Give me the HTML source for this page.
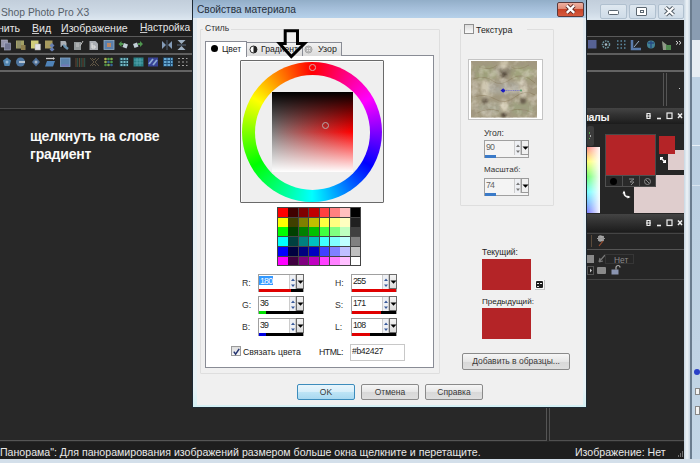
<!DOCTYPE html>
<html><head><meta charset="utf-8">
<style>
*{margin:0;padding:0;box-sizing:border-box}
html,body{width:700px;height:463px;overflow:hidden;background:#282828;font-family:"Liberation Sans",sans-serif;-webkit-font-smoothing:antialiased}
.a{position:absolute}
.t{position:absolute;white-space:pre;line-height:1}
u{text-decoration-thickness:.7px;text-underline-offset:.5px;text-decoration-color:#c8c8c8}
svg{position:absolute;overflow:visible}
</style></head><body>
<div class="a" style="left:0px;top:0px;width:690px;height:20px;background:linear-gradient(#c2cedb,#cdd9e5 60%,#dde7f0);"></div>
<div class="t" style="left:1px;top:8px;font-size:10.3px;color:#56606a;">Shop Photo Pro X3</div>
<div class="a" style="left:600px;top:4px;width:27px;height:14.5px;background:linear-gradient(#dfe8f0,#cfdce8);border:1px solid #b0c0cf;border-radius:2px"></div>
<div class="a" style="left:629px;top:4px;width:27px;height:14.5px;background:linear-gradient(#dfe8f0,#cfdce8);border:1px solid #b0c0cf;border-radius:2px"></div>
<div class="a" style="left:658px;top:4px;width:26px;height:14.5px;background:linear-gradient(#dfe8f0,#cfdce8);border:1px solid #b0c0cf;border-radius:2px"></div>
<div class="a" style="left:608px;top:10px;width:11px;height:4.5px;background:#fff;border:1px solid #5b6670;border-radius:1.5px"></div>
<div class="a" style="left:636px;top:6.5px;width:11px;height:9.5px;background:#fff;border:1.5px solid #5b6670;border-radius:1px"></div>
<div class="a" style="left:639.5px;top:9.5px;width:4.5px;height:3.5px;background:#fff;border:1px solid #5b6670"></div>
<svg style="left:663px;top:5px" width="13" height="12"><path d="M2.5 2.5L10.5 10M10.5 2.5L2.5 10" stroke="#4e5862" stroke-width="4"/><path d="M2.5 2.5L10.5 10M10.5 2.5L2.5 10" stroke="#fff" stroke-width="2.2"/></svg>
<div class="a" style="left:684px;top:0px;width:6px;height:463px;background:linear-gradient(90deg,#c8d6e2,#eef4f8 50%,#c8d6e2);"></div>
<div class="a" style="left:690px;top:0px;width:2px;height:463px;background:#6a7c8e;"></div>
<div class="a" style="left:692px;top:0px;width:8px;height:463px;background:linear-gradient(#b4cade,#c4d6e6);"></div>
<div class="a" style="left:692px;top:0px;width:8px;height:40px;background:#8a9db2;"></div>
<div class="a" style="left:692px;top:40px;width:8px;height:37px;background:#e6edf3;"></div>
<div class="a" style="left:692px;top:77px;width:8px;height:68px;background:#bed2e4;"></div>
<div class="a" style="left:692px;top:144.5px;width:8px;height:1px;background:#e8f0f6;"></div>
<div class="a" style="left:692px;top:185px;width:8px;height:1px;background:#d8e4ee;"></div>
<div class="a" style="left:694px;top:369px;width:6px;height:6px;background:#2a40c8;border-radius:50%"></div>
<div class="a" style="left:695px;top:388px;width:5px;height:7px;background:#f4f4f4;border:1px solid #888"></div>
<div class="a" style="left:695px;top:406px;width:5px;height:9px;background:#f4f4f4;border:1px solid #888"></div>
<div class="a" style="left:0px;top:20px;width:684px;height:16px;background:#1d1d1d;"></div>
<div class="t" style="left:-2px;top:23px;font-size:10.6px;color:#e6e6e6;">нить</div>
<div class="t" style="left:32px;top:23px;font-size:10.6px;color:#e6e6e6;"><u>В</u>ид</div>
<div class="t" style="left:61px;top:23px;font-size:10.6px;color:#e6e6e6;"><u>И</u>зображение</div>
<div class="t" style="left:140px;top:23px;font-size:10.2px;color:#e6e6e6;"><u>Н</u>астройка</div>
<div class="a" style="left:0px;top:36px;width:684px;height:1px;background:#5a5a5a;"></div>
<div class="a" style="left:0px;top:37px;width:684px;height:16px;background:#232323;"></div>
<div class="a" style="left:0px;top:53px;width:684px;height:2px;background:#5e5e5e;"></div>
<div class="a" style="left:0px;top:55px;width:684px;height:15px;background:#232323;"></div>
<div class="a" style="left:0px;top:70px;width:684px;height:2px;background:#646464;"></div>
<div class="a" style="left:0px;top:72px;width:684px;height:36px;background:#282828;"></div>
<div class="a" style="left:0px;top:108px;width:684px;height:1px;background:#4a4a4a;"></div>
<div class="a" style="left:0px;top:109px;width:684px;height:1.5px;background:#202020;"></div>
<svg style="left:0;top:0;filter:saturate(.8) brightness(.92)" width="700" height="80"><rect x="1.5" y="40" width="6" height="7" fill="#a0a0c0" stroke="#c8c8e0" stroke-width=".6"/><rect x="4.5" y="43" width="6" height="7" fill="#7a80a8" stroke="#b8bce0" stroke-width=".6"/><rect x="16" y="40.5" width="8" height="8" fill="#b4b060"/><path d="M18 41v7M20 41v7" stroke="#8a8a70"/><rect x="21" y="45" width="4.5" height="5" fill="#a08a48"/><rect x="31" y="40.5" width="7.5" height="8" fill="#e4e070"/><rect x="35" y="44" width="5.5" height="6" fill="#f4f4fa" stroke="#bbb" stroke-width=".5"/><rect x="45" y="40.5" width="7.5" height="8" fill="#b8a858"/><path d="M52 43l2.5 2.5-2.5 2.5-2.5-2.5zM52 47l2.5 2.5-2.5 2-2.5-2z" fill="#6a8ad0"/><path d="M60.5 41h5l1 2v4h-6z" fill="#b8c0c8"/><path d="M63 45l5 4" stroke="#6aa0c8" stroke-width="2.5"/><circle cx="62.5" cy="46.5" r=".9" fill="#000"/><rect x="74" y="42" width="7" height="8" fill="#a0a8aa"/><path d="M76 44h3M76 46h3" stroke="#eee" stroke-width=".7"/><path d="M80 46l3-5" stroke="#ccc" stroke-width="1"/><path d="M89.5 41h6l2.5 2.5v6.5h-8.5z" fill="#b8bcc4"/><path d="M92 43v5h3v-2h-3" stroke="#f8f8f8" stroke-width="1" fill="none"/><rect x="104" y="40.5" width="10" height="9" fill="#5a8cc8" stroke="#9ac0e0" stroke-width=".8"/><rect x="107" y="43" width="4" height="4" fill="#d89060"/><path d="M118.5 44l3-3v2h2v2h-2v2z" fill="#48a848"/><path d="M124 43l4 1.5-1.5 4-4-1.5z" fill="#cfe0ec"/><path d="M133 44l4-1.5 1.5 4-4 1.5z" fill="#cfe0ec"/><path d="M143 44l-3-3v2h-2v2h2v2z" fill="#48a848"/><path d="M162 41l4 4-4 4z M172 41l-4 4 4 4z" fill="#8aaad0"/><path d="M167 40v10" stroke="#5a7aa0" stroke-width=".8"/><path d="M177.5 40h8l-4 4z M177.5 50h8l-4-4z" fill="#a8c0d8"/><path d="M177 45h9" stroke="#6a8ab0" stroke-width=".8"/><path d="M7 57.5l4 3-1.5 5.5h-5l-1.5-5.5z" fill="#4a90c8"/><circle cx="7" cy="62" r="1.5" fill="#9ccaf0"/><circle cx="20.5" cy="62" r="4.5" fill="#4a80b8"/><path d="M19 62h6" stroke="#e8f0f8" stroke-width="1.5"/><path d="M36 57.5l4 4.5-4 4.5-4-4.5z" fill="#4a78b0"/><circle cx="36" cy="62" r="1.5" fill="#b0c8e0"/><path d="M46 58.5h7" stroke="#ddd" stroke-width="1.3"/><path d="M53 57l2 1.5-2 1.5z" fill="#ddd"/><path d="M47 61h8l-2 5.5h-8z" fill="#4a90d8"/><rect x="60.5" y="58" width="9.5" height="8.5" fill="#5a90c8" stroke="#8ab8e8" stroke-width=".8"/><rect x="61.5" y="64.5" width="7.5" height="2" fill="#7a80d8"/><path d="M76 58v9M79.5 58v9M83 58v9" stroke="#9a5a30" stroke-width=".7"/><path d="M77.7 58v9M81.2 58v9M84.7 58v9" stroke="#2a7a68" stroke-width=".7"/><path d="M90 58l4 4-4 4M99 58l-4 4 4 4M92 58l2 2 2-2M92 66l2-2 2 2" stroke="#6a5c44" stroke-width="1" fill="none"/><circle cx="105.5" cy="59" r="1.3" fill="#c0c040"/><circle cx="108.5" cy="59" r="1.3" fill="#40b040"/><circle cx="111.5" cy="59" r="1.3" fill="#80c040"/><circle cx="105.5" cy="62" r="1.3" fill="#a0c040"/><circle cx="108.5" cy="62" r="1.3" fill="#3070b0"/><circle cx="111.5" cy="62" r="1.3" fill="#40b040"/><circle cx="105.5" cy="65" r="1.3" fill="#40a040"/><circle cx="108.5" cy="65" r="1.3" fill="#80c040"/><circle cx="111.5" cy="65" r="1.3" fill="#3070b0"/><rect x="119.5" y="57.5" width="9" height="9" fill="#1a4a58"/><path d="M120.5 59h2M123.5 59h2M126.5 59h1.5M120.5 62h2M123.5 62h2M126.5 62h1.5M120.5 65h2M123.5 65h2M126.5 65h1.5" stroke="#70d0e0" stroke-width="2"/><rect x="133.5" y="57.5" width="10" height="9" fill="#1a9098"/><path d="M134 60h9M134 63h9M137 58v8M140 58v8" stroke="#60c8d8" stroke-width=".6"/><rect x="148" y="57.5" width="10" height="9" fill="#3848b8"/><path d="M149 64l4-5M153 65l4-5" stroke="#90b8f0" stroke-width="1.8"/><rect x="163" y="57.5" width="10" height="9" fill="#1a5a90"/><path d="M164 59h2.5M167.5 59h2.5M171 59h1.5M164 62h2.5M167.5 62h2.5M171 62h1.5M164 65h2.5M167.5 65h2.5M171 65h1.5" stroke="#60b8f0" stroke-width="2"/><path d="M178 58.5h2M182 58.5h2M186 58.5h1.5M178 62h2M182 62h2M186 62h1.5M178 65.5h2M182 65.5h2M186 65.5h1.5" stroke="#b0b0b0" stroke-width="1"/><rect x="588" y="40" width="8.5" height="8.5" fill="#5a6ab0"/><circle cx="606" cy="44.5" r="3.5" fill="none" stroke="#70a8b8" stroke-width="1.5" stroke-dasharray="1.5 1"/><circle cx="606" cy="44.5" r="1.3" fill="#b0d0e0"/><path d="M617 41h1.5M620.5 41h1.5M624 41h1.5M617 44.5h1.5M620.5 44.5h1.5M624 44.5h1.5M617 48h1.5M620.5 48h1.5M624 48h1.5" stroke="#5a98b8" stroke-width="1.5"/><path d="M632 40v9h9" stroke="#5a88c8" stroke-width="2.5" fill="none"/><path d="M634 47l5-6" stroke="#a0c0e0" stroke-width="1"/><circle cx="651" cy="44.5" r="4" fill="#3a90a8"/><path d="M648 43h6M651 41v7" stroke="#2050a0" stroke-width="1.3"/><path d="M662 41l5 4v5h-4z" fill="#9aa890"/><rect x="666" y="45" width="5" height="5" fill="#4a9a4a"/><path d="M676 41l2 1.8-2 1.8M679 41l2 1.8-2 1.8" stroke="#f0f0f0" stroke-width="1" fill="none"/></svg>
<div class="a" style="left:663px;top:73px;width:1px;height:33px;background:#555;"></div>
<div class="a" style="left:666px;top:73px;width:1px;height:33px;background:#555;"></div>
<div class="a" style="left:678.5px;top:87.5px;width:1.5px;height:1.5px;background:#ccc;"></div>
<div class="t" style="left:30px;top:126.5px;font-size:14px;font-weight:bold;color:#fafafa;letter-spacing:-0.2px;line-height:18px">щелкнуть на слове<br>градиент</div>
<div class="a" style="left:545.5px;top:407px;width:1.3px;height:34px;background:#555;"></div>
<div class="a" style="left:549px;top:279px;width:135px;height:162px;background:transparent;border:1.3px solid #505050;border-right:none;border-top-color:#444"></div>
<div class="a" style="left:0px;top:440px;width:546.8px;height:1.3px;background:#555;"></div>
<div class="a" style="left:0px;top:442px;width:684px;height:17px;background:#1e1e1e;"></div>
<div class="t" style="left:0px;top:447px;font-size:10.6px;color:#e8e8e8;">Панорама": Для панорамирования изображений размером больше окна щелкните и перетащите.</div>
<div class="t" style="left:575px;top:447px;font-size:10.6px;color:#e8e8e8;">Изображение: Нет</div>
<svg style="left:676px;top:450px" width="8" height="9"><path d="M6 2h1M4 4h1M6 4h1M2 6h1M4 6h1M6 6h1" stroke="#bbb" stroke-width="1.2"/></svg>
<div class="a" style="left:0px;top:459px;width:700px;height:4px;background:#d3dfea;"></div>
<div class="a" style="left:586px;top:108px;width:98px;height:16px;background:linear-gradient(#444,#333 40%,#1c1c1c);"></div>
<div class="t" style="left:582.5px;top:111.5px;font-size:10.6px;color:#f4f4f4;font-weight:bold;letter-spacing:-0.4px">иалы</div>
<svg style="left:645px;top:112px" width="40" height="8"><path d="M2 1.5h3v5h-3zM1 4h5" stroke="#eee" stroke-width="1.2" fill="none"/><path d="M12 6.5h4" stroke="#eee" stroke-width="1.6"/><rect x="22" y="1" width="5" height="5.5" stroke="#eee" stroke-width="1.2" fill="none"/><path d="M33 1.5l4 4.5M37 1.5l-4 4.5" stroke="#eee" stroke-width="1.5"/></svg>
<div class="a" style="left:586px;top:124px;width:98px;height:90px;background:#262626;"></div>
<div class="a" style="left:587px;top:126px;width:7px;height:20px;background:#3c3c3c;border-radius:2px"></div>
<div class="a" style="left:588.5px;top:132px;width:1.5px;height:1.5px;background:#5a5;"></div>
<div class="a" style="left:589.5px;top:135px;width:1.5px;height:1.5px;background:#aaa;"></div>
<div class="a" style="left:588.5px;top:137.5px;width:1.5px;height:1.5px;background:#5a5;"></div>
<div class="a" style="left:587.3px;top:146.5px;width:13px;height:66.5px;background:linear-gradient(90deg,rgba(255,255,255,.25),rgba(255,255,255,.6) 50%,rgba(255,255,255,.97)),linear-gradient(#ff6060,#ffff40 22%,#40ff40 45%,#40ffff 68%,#5050ff);"></div>
<div class="a" style="left:634px;top:175px;width:50px;height:38px;background:#dfcdcd;"></div>
<div class="a" style="left:605px;top:133.5px;width:51px;height:42px;background:#b42427;border:1px solid #4a4a4a"></div>
<div class="a" style="left:605px;top:175px;width:51px;height:11.5px;background:#2a2a2a;border:1px solid #505050"></div>
<div class="a" style="left:622px;top:176px;width:1px;height:10px;background:#505050;"></div>
<div class="a" style="left:639px;top:176px;width:1px;height:10px;background:#505050;"></div>
<div class="a" style="left:610px;top:178px;width:7px;height:7px;background:#000;border-radius:50%"></div>
<svg style="left:627px;top:177px" width="9" height="9"><path d="M2 2h5l-4 3h4l-3 3" stroke="#888" stroke-width="1" fill="none"/></svg>
<svg style="left:643px;top:177px" width="9" height="9"><circle cx="4.5" cy="4.5" r="3" stroke="#888" fill="none"/><path d="M3 3l3 3" stroke="#888"/></svg>
<div class="a" style="left:668px;top:150px;width:16px;height:20px;background:#dfcdcd;"></div>
<div class="a" style="left:659px;top:136px;width:16px;height:18px;background:#b42427;"></div>
<svg style="left:659px;top:156px" width="8" height="8"><path d="M1.5 1.5L6.5 6.5" stroke="#f4f4f4" stroke-width="1.5"/><path d="M1 1h3v1.5h-1.5v1.5h-1.5zM7 7h-3v-1.5h1.5v-1.5h1.5z" fill="#fff"/></svg>
<svg style="left:622px;top:190px" width="9" height="9"><path d="M2 2Q2 7 7 7" stroke="#f4f4f4" stroke-width="1.5" fill="none"/><path d="M0.5 3.5L2 0.5L3.5 3.5zM5.5 5.5L8.5 7L5.5 8.5z" fill="#fff"/></svg>
<div class="a" style="left:586px;top:214px;width:98px;height:18px;background:linear-gradient(#444,#333 40%,#1c1c1c);"></div>
<svg style="left:645px;top:219px" width="40" height="8"><path d="M2 1.5h3v5h-3zM1 4h5" stroke="#eee" stroke-width="1.2" fill="none"/><path d="M12 6.5h4" stroke="#eee" stroke-width="1.6"/><rect x="22" y="1" width="5" height="5.5" stroke="#eee" stroke-width="1.2" fill="none"/><path d="M33 1.5l4 4.5M37 1.5l-4 4.5" stroke="#eee" stroke-width="1.5"/></svg>
<div class="a" style="left:586px;top:232px;width:98px;height:47px;background:#262626;"></div>
<div class="a" style="left:586px;top:232.5px;width:98px;height:1px;background:#444;"></div>
<div class="a" style="left:591px;top:235px;width:1px;height:12px;background:#5a4a3a;"></div>
<svg style="left:596px;top:234px" width="12" height="13"><circle cx="5" cy="4.5" r="3" fill="#aaa"/><path d="M4 1v7M1 4.5h8M2 2l6 5M8 2l-6 5" stroke="#999" stroke-width="1"/><path d="M7 7L3 12" stroke="#a05030" stroke-width="1.2"/></svg>
<div class="a" style="left:586px;top:248.5px;width:98px;height:1.2px;background:#555;"></div>
<div class="a" style="left:587px;top:254.5px;width:7px;height:8px;background:#8a8a8a;"></div>
<svg style="left:597px;top:253px" width="10" height="11"><path d="M2 9L8 2M2 9l1-4M2 9l4-1" stroke="#777" stroke-width="1.2" fill="none"/></svg>
<div class="a" style="left:605px;top:254px;width:29px;height:10px;background:transparent;border:1px solid #363636"></div>
<div class="t" style="left:614px;top:255.5px;font-size:8.4px;color:#8a8a8a;">Нет</div>
<div class="a" style="left:587px;top:266px;width:7px;height:9px;background:#222;border:1px solid #555"></div>
<svg style="left:589px;top:268px" width="4" height="5"><path d="M1 0.5L3 2.5L1 4.5Z" fill="#ccc"/></svg>
<div class="a" style="left:597px;top:267px;width:9px;height:7px;background:#8a8a8a;border-radius:1px"></div>
<svg style="left:611px;top:265px" width="9" height="10"><rect x="0.5" y="4.5" width="7" height="5" fill="#8a94b0"/><path d="M5 4.5V2.5a2 2 0 0 1 4 0" stroke="#aaa" stroke-width="1.2" fill="none"/></svg>
<div class="a" style="left:586px;top:279px;width:98px;height:1px;background:#444;"></div>
<div class="a" style="left:192px;top:0px;width:395px;height:408px;background:linear-gradient(#e2eaf1,#e8f2f6 95%,#d4f0f4);border:1px solid #1e2a34;border-top:none"></div>
<div class="a" style="left:193px;top:0px;width:393px;height:18px;background:linear-gradient(#92aec8,#a4bed9 45%,#b6d1ea);"></div>
<div class="t" style="left:197px;top:4.8px;font-size:10.2px;color:#26303a;">Свойства материала</div>
<div class="a" style="left:557px;top:1.5px;width:27px;height:15px;background:linear-gradient(#eeb0a0,#e2907c 42%,#c84428 50%,#d65a3e);border:1px solid #5a3a3c;border-radius:2px"></div>
<svg style="left:564px;top:3px" width="13" height="12"><path d="M2.8 2.5L10.2 9.8M10.2 2.5L2.8 9.8" stroke="#5a2a28" stroke-width="4"/><path d="M2.8 2.5L10.2 9.8M10.2 2.5L2.8 9.8" stroke="#fff" stroke-width="2.4"/></svg>
<div class="a" style="left:197px;top:18px;width:386px;height:387px;background:#f0f0f0;"></div>
<div class="a" style="left:199.5px;top:28.5px;width:240.5px;height:345px;background:transparent;border:1px solid #dedede;border-radius:1px"></div>
<div class="t" style="left:203px;top:24px;font-size:8.5px;color:#333;background:#f0f0f0;padding:0 2px">Стиль</div>
<div class="a" style="left:205px;top:55px;width:229px;height:313px;background:#fff;border:1px solid #898c95"></div>
<div class="a" style="left:246px;top:42px;width:57px;height:14px;background:linear-gradient(#f2f2f2,#dcdcdc);border:1px solid #898c95;border-bottom:none"></div>
<div class="a" style="left:302px;top:42px;width:40px;height:14px;background:linear-gradient(#f2f2f2,#dcdcdc);border:1px solid #898c95;border-bottom:none"></div>
<div class="a" style="left:205px;top:41px;width:42px;height:16px;background:#fff;border:1px solid #898c95;border-bottom:none"></div>
<div class="a" style="left:211px;top:45px;width:7px;height:7px;background:#000;border-radius:50%"></div>
<div class="t" style="left:222px;top:45px;font-size:8.6px;color:#222;">Цвет</div>
<svg style="left:249px;top:45px" width="9" height="9"><circle cx="4.5" cy="4.5" r="3.5" fill="#fff" stroke="#333"/><path d="M4.5 1A3.5 3.5 0 0 1 4.5 8Z" fill="#222"/></svg>
<div class="t" style="left:261px;top:45px;font-size:8.6px;color:#222;">Градиент</div>
<svg style="left:304px;top:45px" width="9" height="9"><circle cx="4.5" cy="4.5" r="3.5" fill="#e8e8e8" stroke="#a0a0a0"/><path d="M4.5 1V8M1 4.5H8M2.5 2.5h4v4h-4z" stroke="#b0b0b0" stroke-width=".8" fill="none"/></svg>
<div class="t" style="left:318px;top:45px;font-size:8.8px;color:#222;">Узор</div>
<div class="a" style="left:240px;top:60px;width:144px;height:143px;background:#efefef;border:1.5px solid #6a6a6a;border-radius:1px;box-shadow:inset 1px 1px 0 #fafafa"></div>
<div class="a" style="left:242px;top:62px;width:140px;height:140px;background:conic-gradient(#f00,#f0f,#00f,#0ff,#0f0,#ff0,#f00);border-radius:50%"></div>
<div class="a" style="left:254.5px;top:74.5px;width:115px;height:115px;background:#efefef;border-radius:50%"></div>
<div class="a" style="left:272px;top:92px;width:81px;height:80px;background:linear-gradient(#000,rgba(0,0,0,0) 50%,rgba(255,255,255,0) 50%,#fff),linear-gradient(90deg,#808080,#f00);"></div>
<div class="a" style="left:309px;top:64px;width:6.5px;height:6.5px;background:transparent;border-radius:50%;border:1px solid #d8a8a8"></div>
<div class="a" style="left:322px;top:121.5px;width:7px;height:7px;background:transparent;border-radius:50%;border:1px solid #b8a8a8"></div>
<div class="a" style="left:277px;top:207px;width:84px;height:59px;background:#444;"></div>
<div class="a" style="left:278.0px;top:208.0px;width:9.6px;height:8.9px;background:#ff0000;"></div>
<div class="a" style="left:288.4px;top:208.0px;width:9.6px;height:8.9px;background:#400000;"></div>
<div class="a" style="left:298.8px;top:208.0px;width:9.6px;height:8.9px;background:#800000;"></div>
<div class="a" style="left:309.2px;top:208.0px;width:9.6px;height:8.9px;background:#c00000;"></div>
<div class="a" style="left:319.6px;top:208.0px;width:9.6px;height:8.9px;background:#ff4040;"></div>
<div class="a" style="left:330.0px;top:208.0px;width:9.6px;height:8.9px;background:#ff8080;"></div>
<div class="a" style="left:340.4px;top:208.0px;width:9.6px;height:8.9px;background:#ffc0c0;"></div>
<div class="a" style="left:350.8px;top:208.0px;width:9.6px;height:8.9px;background:#000000;"></div>
<div class="a" style="left:278.0px;top:217.7px;width:9.6px;height:8.9px;background:#ffff00;"></div>
<div class="a" style="left:288.4px;top:217.7px;width:9.6px;height:8.9px;background:#404000;"></div>
<div class="a" style="left:298.8px;top:217.7px;width:9.6px;height:8.9px;background:#808000;"></div>
<div class="a" style="left:309.2px;top:217.7px;width:9.6px;height:8.9px;background:#c0c000;"></div>
<div class="a" style="left:319.6px;top:217.7px;width:9.6px;height:8.9px;background:#ffff40;"></div>
<div class="a" style="left:330.0px;top:217.7px;width:9.6px;height:8.9px;background:#ffff80;"></div>
<div class="a" style="left:340.4px;top:217.7px;width:9.6px;height:8.9px;background:#ffffc0;"></div>
<div class="a" style="left:350.8px;top:217.7px;width:9.6px;height:8.9px;background:#202020;"></div>
<div class="a" style="left:278.0px;top:227.4px;width:9.6px;height:8.9px;background:#00ff00;"></div>
<div class="a" style="left:288.4px;top:227.4px;width:9.6px;height:8.9px;background:#004000;"></div>
<div class="a" style="left:298.8px;top:227.4px;width:9.6px;height:8.9px;background:#008000;"></div>
<div class="a" style="left:309.2px;top:227.4px;width:9.6px;height:8.9px;background:#00c000;"></div>
<div class="a" style="left:319.6px;top:227.4px;width:9.6px;height:8.9px;background:#40ff40;"></div>
<div class="a" style="left:330.0px;top:227.4px;width:9.6px;height:8.9px;background:#80ff80;"></div>
<div class="a" style="left:340.4px;top:227.4px;width:9.6px;height:8.9px;background:#c0ffc0;"></div>
<div class="a" style="left:350.8px;top:227.4px;width:9.6px;height:8.9px;background:#404040;"></div>
<div class="a" style="left:278.0px;top:237.1px;width:9.6px;height:8.9px;background:#00ffff;"></div>
<div class="a" style="left:288.4px;top:237.1px;width:9.6px;height:8.9px;background:#004040;"></div>
<div class="a" style="left:298.8px;top:237.1px;width:9.6px;height:8.9px;background:#008080;"></div>
<div class="a" style="left:309.2px;top:237.1px;width:9.6px;height:8.9px;background:#00c0c0;"></div>
<div class="a" style="left:319.6px;top:237.1px;width:9.6px;height:8.9px;background:#40ffff;"></div>
<div class="a" style="left:330.0px;top:237.1px;width:9.6px;height:8.9px;background:#80ffff;"></div>
<div class="a" style="left:340.4px;top:237.1px;width:9.6px;height:8.9px;background:#c0ffff;"></div>
<div class="a" style="left:350.8px;top:237.1px;width:9.6px;height:8.9px;background:#808080;"></div>
<div class="a" style="left:278.0px;top:246.8px;width:9.6px;height:8.9px;background:#0000ff;"></div>
<div class="a" style="left:288.4px;top:246.8px;width:9.6px;height:8.9px;background:#000040;"></div>
<div class="a" style="left:298.8px;top:246.8px;width:9.6px;height:8.9px;background:#000080;"></div>
<div class="a" style="left:309.2px;top:246.8px;width:9.6px;height:8.9px;background:#0000c0;"></div>
<div class="a" style="left:319.6px;top:246.8px;width:9.6px;height:8.9px;background:#4040ff;"></div>
<div class="a" style="left:330.0px;top:246.8px;width:9.6px;height:8.9px;background:#8080ff;"></div>
<div class="a" style="left:340.4px;top:246.8px;width:9.6px;height:8.9px;background:#c0c0ff;"></div>
<div class="a" style="left:350.8px;top:246.8px;width:9.6px;height:8.9px;background:#c0c0c0;"></div>
<div class="a" style="left:278.0px;top:256.5px;width:9.6px;height:8.9px;background:#ff00ff;"></div>
<div class="a" style="left:288.4px;top:256.5px;width:9.6px;height:8.9px;background:#400040;"></div>
<div class="a" style="left:298.8px;top:256.5px;width:9.6px;height:8.9px;background:#800080;"></div>
<div class="a" style="left:309.2px;top:256.5px;width:9.6px;height:8.9px;background:#c000c0;"></div>
<div class="a" style="left:319.6px;top:256.5px;width:9.6px;height:8.9px;background:#ff40ff;"></div>
<div class="a" style="left:330.0px;top:256.5px;width:9.6px;height:8.9px;background:#ff80ff;"></div>
<div class="a" style="left:340.4px;top:256.5px;width:9.6px;height:8.9px;background:#ffc0ff;"></div>
<div class="a" style="left:350.8px;top:256.5px;width:9.6px;height:8.9px;background:#ffffff;"></div>
<div class="t" style="left:242px;top:278.8px;font-size:8.7px;color:#333;">R:</div>
<div class="a" style="left:258px;top:274px;width:46px;height:18px;background:#fff;border:1px solid #a0a0a0"></div>
<div class="a" style="left:289px;top:275px;width:7px;height:14px;background:#eef0f4;border-left:1px solid #ccc;border-right:1px solid #ccc"></div>
<svg style="left:290px;top:276px" width="6" height="13"><path d="M1 5L3 2.5L5 5Z M1 8.5L3 11L5 8.5Z" fill="#3a5a9a"/></svg>
<div class="a" style="left:296px;top:274px;width:8px;height:15px;background:linear-gradient(#f4f4f4,#dcdcdc);border:1px solid #6a6a6a"></div>
<svg style="left:296.5px;top:280px" width="7" height="5"><path d="M0.5 0.5H6.5L3.5 3.8Z" fill="#000"/></svg>
<div class="a" style="left:259px;top:289px;width:44px;height:2.5px;background:#000;"></div>
<div class="a" style="left:259px;top:289px;width:31.68px;height:2.5px;background:#e00000;"></div>
<div class="a" style="left:259px;top:275.5px;width:13.5px;height:9.5px;background:#3399ff;"></div>
<div class="t" style="left:260px;top:277px;font-size:8.8px;color:#fff;letter-spacing:-0.8px">180</div>
<div class="t" style="left:242px;top:300.8px;font-size:8.7px;color:#333;">G:</div>
<div class="a" style="left:258px;top:296px;width:46px;height:18px;background:#fff;border:1px solid #a0a0a0"></div>
<div class="a" style="left:289px;top:297px;width:7px;height:14px;background:#eef0f4;border-left:1px solid #ccc;border-right:1px solid #ccc"></div>
<svg style="left:290px;top:298px" width="6" height="13"><path d="M1 5L3 2.5L5 5Z M1 8.5L3 11L5 8.5Z" fill="#3a5a9a"/></svg>
<div class="a" style="left:296px;top:296px;width:8px;height:15px;background:linear-gradient(#f4f4f4,#dcdcdc);border:1px solid #6a6a6a"></div>
<svg style="left:296.5px;top:302px" width="7" height="5"><path d="M0.5 0.5H6.5L3.5 3.8Z" fill="#000"/></svg>
<div class="a" style="left:259px;top:311px;width:44px;height:2.5px;background:#000;"></div>
<div class="a" style="left:259px;top:311px;width:6.6px;height:2.5px;background:#00e000;"></div>
<div class="t" style="left:260px;top:299px;font-size:8.8px;color:#222;letter-spacing:-0.8px">36</div>
<div class="t" style="left:242px;top:322.8px;font-size:8.7px;color:#333;">B:</div>
<div class="a" style="left:258px;top:318px;width:46px;height:18px;background:#fff;border:1px solid #a0a0a0"></div>
<div class="a" style="left:289px;top:319px;width:7px;height:14px;background:#eef0f4;border-left:1px solid #ccc;border-right:1px solid #ccc"></div>
<svg style="left:290px;top:320px" width="6" height="13"><path d="M1 5L3 2.5L5 5Z M1 8.5L3 11L5 8.5Z" fill="#3a5a9a"/></svg>
<div class="a" style="left:296px;top:318px;width:8px;height:15px;background:linear-gradient(#f4f4f4,#dcdcdc);border:1px solid #6a6a6a"></div>
<svg style="left:296.5px;top:324px" width="7" height="5"><path d="M0.5 0.5H6.5L3.5 3.8Z" fill="#000"/></svg>
<div class="a" style="left:259px;top:333px;width:44px;height:2.5px;background:#000;"></div>
<div class="a" style="left:259px;top:333px;width:6.6px;height:2.5px;background:#0000e0;"></div>
<div class="t" style="left:260px;top:321px;font-size:8.8px;color:#222;letter-spacing:-0.8px">39</div>
<div class="t" style="left:335px;top:278.8px;font-size:8.7px;color:#333;">H:</div>
<div class="a" style="left:351px;top:274px;width:46px;height:18px;background:#fff;border:1px solid #a0a0a0"></div>
<div class="a" style="left:382px;top:275px;width:7px;height:14px;background:#eef0f4;border-left:1px solid #ccc;border-right:1px solid #ccc"></div>
<svg style="left:383px;top:276px" width="6" height="13"><path d="M1 5L3 2.5L5 5Z M1 8.5L3 11L5 8.5Z" fill="#3a5a9a"/></svg>
<div class="a" style="left:389px;top:274px;width:8px;height:15px;background:linear-gradient(#f4f4f4,#dcdcdc);border:1px solid #6a6a6a"></div>
<svg style="left:389.5px;top:280px" width="7" height="5"><path d="M0.5 0.5H6.5L3.5 3.8Z" fill="#000"/></svg>
<div class="a" style="left:352px;top:289px;width:44px;height:2.5px;background:#000;"></div>
<div class="a" style="left:352px;top:289px;width:44px;height:2.5px;background:#e00000;"></div>
<div class="t" style="left:353px;top:277px;font-size:8.8px;color:#222;letter-spacing:-0.8px">255</div>
<div class="t" style="left:335px;top:300.8px;font-size:8.7px;color:#333;">S:</div>
<div class="a" style="left:351px;top:296px;width:46px;height:18px;background:#fff;border:1px solid #a0a0a0"></div>
<div class="a" style="left:382px;top:297px;width:7px;height:14px;background:#eef0f4;border-left:1px solid #ccc;border-right:1px solid #ccc"></div>
<svg style="left:383px;top:298px" width="6" height="13"><path d="M1 5L3 2.5L5 5Z M1 8.5L3 11L5 8.5Z" fill="#3a5a9a"/></svg>
<div class="a" style="left:389px;top:296px;width:8px;height:15px;background:linear-gradient(#f4f4f4,#dcdcdc);border:1px solid #6a6a6a"></div>
<svg style="left:389.5px;top:302px" width="7" height="5"><path d="M0.5 0.5H6.5L3.5 3.8Z" fill="#000"/></svg>
<div class="a" style="left:352px;top:311px;width:44px;height:2.5px;background:#000;"></div>
<div class="a" style="left:352px;top:311px;width:29.48px;height:2.5px;background:#e00000;"></div>
<div class="t" style="left:353px;top:299px;font-size:8.8px;color:#222;letter-spacing:-0.8px">171</div>
<div class="t" style="left:335px;top:322.8px;font-size:8.7px;color:#333;">L:</div>
<div class="a" style="left:351px;top:318px;width:46px;height:18px;background:#fff;border:1px solid #a0a0a0"></div>
<div class="a" style="left:382px;top:319px;width:7px;height:14px;background:#eef0f4;border-left:1px solid #ccc;border-right:1px solid #ccc"></div>
<svg style="left:383px;top:320px" width="6" height="13"><path d="M1 5L3 2.5L5 5Z M1 8.5L3 11L5 8.5Z" fill="#3a5a9a"/></svg>
<div class="a" style="left:389px;top:318px;width:8px;height:15px;background:linear-gradient(#f4f4f4,#dcdcdc);border:1px solid #6a6a6a"></div>
<svg style="left:389.5px;top:324px" width="7" height="5"><path d="M0.5 0.5H6.5L3.5 3.8Z" fill="#000"/></svg>
<div class="a" style="left:352px;top:333px;width:44px;height:2.5px;background:#000;"></div>
<div class="a" style="left:352px;top:333px;width:18.48px;height:2.5px;background:#e00000;"></div>
<div class="t" style="left:353px;top:321px;font-size:8.8px;color:#222;letter-spacing:-0.8px">108</div>
<div class="a" style="left:231px;top:346px;width:10px;height:10px;background:linear-gradient(#dcdcdc,#f8f8f8);border:1px solid #9a9a9a"></div>
<svg style="left:231px;top:345.5px" width="11" height="11"><path d="M2.8 5.6L4.6 8.2L8.2 2.8" stroke="#243470" stroke-width="1.5" fill="none"/></svg>
<div class="t" style="left:243px;top:347.5px;font-size:8.7px;color:#222;">Связать цвета</div>
<div class="t" style="left:319px;top:347.5px;font-size:8.7px;color:#222;letter-spacing:-0.4px">HTML:</div>
<div class="a" style="left:350px;top:344px;width:55px;height:17px;background:#fff;border:1px solid #c8c8c8"></div>
<div class="t" style="left:352px;top:347px;font-size:8.7px;color:#222;letter-spacing:-0.4px">#b42427</div>
<div class="a" style="left:459.5px;top:28.5px;width:94px;height:177px;background:transparent;border:1px solid #dedede;border-radius:1px"></div>
<div class="a" style="left:461px;top:23px;width:66px;height:12px;background:#f0f0f0;"></div>
<div class="a" style="left:464px;top:24px;width:10px;height:10px;background:linear-gradient(#ddd,#fafafa);border:1px solid #8f8f8f"></div>
<div class="t" style="left:476px;top:26px;font-size:8.8px;color:#222;">Текстура</div>
<div class="a" style="left:468px;top:59px;width:75px;height:61px;background:#fff;border:1px solid #c4c4c4"></div>
<svg style="left:470.5px;top:61px;overflow:hidden" width="66" height="56.5" viewBox="0 0 66 56.5">
<defs><filter id="tx" x="0" y="0" width="100%" height="100%"><feTurbulence type="fractalNoise" baseFrequency="0.14" numOctaves="3" seed="7"/><feColorMatrix type="matrix" values="0 0 0 0 0.35  0 0 0 0 0.3  0 0 0 0 0.22  3 0 0 0 -1.3"/></filter>
<filter id="tx2" x="0" y="0" width="100%" height="100%"><feTurbulence type="fractalNoise" baseFrequency="0.12" numOctaves="3" seed="3"/><feColorMatrix type="matrix" values="0 0 0 0 0.92  0 0 0 0 0.88  0 0 0 0 0.78  0 3 0 0 -1.35"/></filter><filter id="bl"><feGaussianBlur stdDeviation="2.2"/></filter><filter id="bl2"><feGaussianBlur stdDeviation="1.2"/></filter></defs>
<rect width="66" height="56.5" fill="#a39a80"/>
<g filter="url(#bl)">
<ellipse cx="14" cy="12" rx="12" ry="8" fill="#9ea07a"/>
<ellipse cx="52" cy="12" rx="12" ry="8" fill="#a2a47e"/>
<ellipse cx="33" cy="27" rx="20" ry="6" fill="#aaa89c"/>
<ellipse cx="20" cy="47" rx="14" ry="6" fill="#a8a690"/>
<ellipse cx="50" cy="47" rx="14" ry="7" fill="#9ea080"/>
<ellipse cx="33" cy="10" rx="8" ry="5" fill="#8a8270"/>
</g>
<g filter="url(#bl2)">
<ellipse cx="14" cy="27" rx="4" ry="9" fill="#d6cfb8" opacity=".85"/>
<ellipse cx="52" cy="27" rx="4" ry="9" fill="#d6cfb8" opacity=".85"/>
<ellipse cx="33" cy="3" rx="4" ry="5" fill="#d2c9b0" opacity=".85"/>
<ellipse cx="33" cy="44" rx="4" ry="7" fill="#d2c9b0" opacity=".85"/>
<ellipse cx="33" cy="14" rx="3" ry="3" fill="#5a5040"/>
<ellipse cx="14" cy="40" rx="3" ry="3" fill="#6a6050"/>
<ellipse cx="52" cy="40" rx="3" ry="3" fill="#6a6050"/>
<ellipse cx="33" cy="54" rx="3" ry="2.5" fill="#5a5040"/>
</g>
<path d="M2 18Q15 14 22 20T40 18T64 22M3 36Q14 32 24 38T44 36T64 34M8 6Q20 10 26 4M40 6Q48 10 58 4M6 52Q18 46 28 50M38 50Q50 46 62 52" stroke="#7a6a48" stroke-width=".7" fill="none" opacity=".6"/>
<rect width="66" height="56.5" filter="url(#tx)" opacity=".6"/><rect width="66" height="56.5" filter="url(#tx2)" opacity=".35"/>
</svg>
<svg style="left:499px;top:87px" width="26" height="7"><path d="M5 3.5H21" stroke="#7070c8" stroke-width=".8" stroke-dasharray="1.2 .6"/><path d="M1.5 3.5L4.5 1V6Z" fill="#1a1ac0"/><circle cx="4.5" cy="3.5" r="1.6" fill="#1a1ac0"/><circle cx="22" cy="3.5" r="1" fill="#50a070"/></svg>
<div class="t" style="left:484px;top:129px;font-size:8.6px;color:#333;">Угол:</div>
<div class="t" style="left:484px;top:166px;font-size:8px;color:#333;">Масштаб:</div>
<div class="a" style="left:484px;top:140px;width:45px;height:18px;background:#f4f4f4;border:1px solid #a0a0a0"></div>
<div class="a" style="left:514px;top:141px;width:7px;height:14px;background:#eef0f4;border-left:1px solid #ccc;border-right:1px solid #ccc"></div>
<svg style="left:515px;top:142px" width="6" height="13"><path d="M1 5L3 2.5L5 5Z M1 8.5L3 11L5 8.5Z" fill="#777"/></svg>
<div class="a" style="left:521px;top:140px;width:8px;height:15px;background:#f0f0f0;border:1px solid #9a9a9a"></div>
<svg style="left:521.5px;top:146px" width="7" height="5"><path d="M0.5 0.5H6.5L3.5 3.8Z" fill="#000"/></svg>
<div class="a" style="left:485px;top:155px;width:10.75px;height:2.5px;background:#3a7ac8;"></div>
<div class="t" style="left:486px;top:143px;font-size:8.8px;color:#666;letter-spacing:-0.8px">90</div>
<div class="a" style="left:484px;top:178px;width:45px;height:18px;background:#f4f4f4;border:1px solid #a0a0a0"></div>
<div class="a" style="left:514px;top:179px;width:7px;height:14px;background:#eef0f4;border-left:1px solid #ccc;border-right:1px solid #ccc"></div>
<svg style="left:515px;top:180px" width="6" height="13"><path d="M1 5L3 2.5L5 5Z M1 8.5L3 11L5 8.5Z" fill="#777"/></svg>
<div class="a" style="left:521px;top:178px;width:8px;height:15px;background:#f0f0f0;border:1px solid #9a9a9a"></div>
<svg style="left:521.5px;top:184px" width="7" height="5"><path d="M0.5 0.5H6.5L3.5 3.8Z" fill="#000"/></svg>
<div class="a" style="left:485px;top:193px;width:10.75px;height:2.5px;background:#3a7ac8;"></div>
<div class="t" style="left:486px;top:181px;font-size:8.8px;color:#666;letter-spacing:-0.8px">74</div>
<div class="t" style="left:482px;top:248px;font-size:8.4px;color:#222;">Текущий:</div>
<div class="a" style="left:482px;top:259px;width:49px;height:31px;background:#b42427;"></div>
<div class="a" style="left:534.8px;top:280px;width:10px;height:9.5px;background:#fafafa;border-right:1px solid #c0c0c0;border-bottom:1px solid #c8c8c8"></div>
<div class="a" style="left:536px;top:281px;width:7px;height:7px;background:#1e1e1e;border-radius:1px"></div>
<div class="a" style="left:537.2px;top:282.6px;width:1.9px;height:1.7px;background:#f0f0f0;"></div>
<div class="a" style="left:540.2px;top:282.6px;width:1.9px;height:1.7px;background:#f0f0f0;"></div>
<div class="a" style="left:537.2px;top:285.6px;width:1.9px;height:1.5px;background:#d8d8d8;"></div>
<div class="t" style="left:482px;top:298px;font-size:8.1px;color:#222;">Предыдущий:</div>
<div class="a" style="left:482px;top:308px;width:49px;height:31px;background:#b42427;"></div>
<div class="a" style="left:462px;top:353px;width:108px;height:17px;background:linear-gradient(#f6f6f6,#e6e6e6 50%,#d8d8d8 51%,#dedede);border:1px solid #8a8a8a;border-radius:2px"></div>
<div class="t" style="left:462px;top:357px;width:108px;text-align:center;font-size:8.5px;color:#383838">Добавить в образцы...</div>
<div class="a" style="left:297px;top:384px;width:58px;height:16px;background:linear-gradient(#e8f5fc,#d6eefa 50%,#bde4f6 51%,#a8d8f0);border:1px solid #3c8cbc;border-radius:2px"></div>
<div class="t" style="left:297px;top:388px;width:58px;text-align:center;font-size:8.5px;color:#383838">OK</div>
<div class="a" style="left:361px;top:384px;width:58px;height:16px;background:linear-gradient(#f6f6f6,#e6e6e6 50%,#d8d8d8 51%,#dedede);border:1px solid #8a8a8a;border-radius:2px"></div>
<div class="t" style="left:361px;top:388px;width:58px;text-align:center;font-size:8.5px;color:#383838">Отмена</div>
<div class="a" style="left:425px;top:384px;width:58px;height:16px;background:linear-gradient(#f6f6f6,#e6e6e6 50%,#d8d8d8 51%,#dedede);border:1px solid #8a8a8a;border-radius:2px"></div>
<div class="t" style="left:425px;top:388px;width:58px;text-align:center;font-size:8.5px;color:#383838">Справка</div>
<svg style="left:274px;top:27px" width="36" height="34"><path d="M11.2 3.8H23.5V16.5H30.5L17.3 29.5L5.5 16.5H11.2Z" fill="none" stroke="#000" stroke-width="3" stroke-linejoin="miter"/></svg>
</body></html>
